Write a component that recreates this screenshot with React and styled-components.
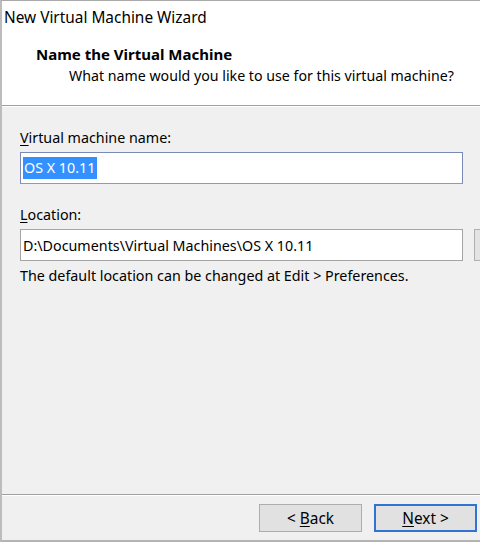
import React from "react";
import styled, {createGlobalStyle} from "styled-components";

const Global = createGlobalStyle`
    html, body {
        margin: 0;
        padding: 0;
        background: #f0f0f0;
    }
    body {
        font-family: "Noto Sans", "Open Sans", sans-serif;
        color: #000;
    }
`

const Window = styled.div`
    width: 480px;
    height: 542px;
    box-sizing: border-box;
    border-top: 1px solid #a9a9a9;
    border-left: 2px solid #bcbcbc;
    border-bottom: 2px solid #b4b4b4;
    display: flex;
    flex-direction: column;
    background: #f0f0f0;
    overflow: hidden;
`

const Header = styled.div`
    background: #fff;
    height: 105px;
    flex-shrink: 0;
    box-sizing: border-box;
    padding: 6px 0 0 2px;
    border-bottom: 1px solid #a0a0a0;
    box-shadow: 0 1px 0 #fff;
`

const Caption = styled.div`
    font-size: 15.4px;
    line-height: 22px;
`

const Heading = styled.div`
    font-weight: bold;
    font-size: 15px;
    line-height: 20px;
    margin: 15px 0 0 32px;
`

const Subheading = styled.div`
    font-size: 14.2px;
    line-height: 20px;
    margin: 2px 0 0 65px;
`

const Body = styled.div`
    flex: 1;
    padding: 22px 0 0 18px;
    display: flex;
    flex-direction: column;
`

const Label = styled.div`
    font-size: 14.3px;
    line-height: 20px;
    margin-top: ${({top}) => top || 0}px;
    u { text-decoration-thickness: 1px; text-underline-offset: 2px; }
`

const FieldRow = styled.div`
    display: flex;
    gap: 11px;
    margin-top: 4px;
`

const Field = styled.div`
    width: 443px;
    height: 32px;
    flex-shrink: 0;
    box-sizing: border-box;
    background: #fff;
    border: 1px solid ${({focused}) => (focused ? "#7a8ab8" : "#a5a5a5")};
    border-bottom-color: ${({focused}) => (focused ? "#9a8fd0" : "#a5a5a5")};
    font-size: 14.3px;
    display: flex;
    align-items: center;
    padding-left: 2px;
`

const Selected = styled.span`
    background: #3390ff;
    color: #fff;
    line-height: 22px;
    padding: 0 2px 0 1px;
`

const Browse = styled.div`
    width: 30px;
    height: 32px;
    flex-shrink: 0;
    box-sizing: border-box;
    border: 1px solid #b0b0b0;
    background: #e3e3e3;
`

const Note = styled.div`
    font-size: 14.3px;
    line-height: 20px;
    margin-top: 5px;
`

const Footer = styled.div`
    height: 46px;
    flex-shrink: 0;
    box-sizing: border-box;
    border-top: 1px solid #a0a0a0;
    box-shadow: inset 0 1px 0 #fff;
    display: flex;
    justify-content: flex-end;
    align-items: flex-start;
    gap: 12px;
    padding: 9px 3px 0 0;
`

const Button = styled.div`
    width: 103px;
    height: 28px;
    box-sizing: border-box;
    background: #e1e1e1;
    border: ${({primary}) => (primary ? "2px solid #2f74d0" : "1px solid #adadad")};
    display: flex;
    align-items: center;
    justify-content: center;
    font-size: 15.4px;
    u { text-decoration-thickness: 1px; text-underline-offset: 2px; }
`

const App = () => {
    return (
        <>
            <Global/>
            <Window>
                <Header>
                    <Caption>New Virtual Machine Wizard</Caption>
                    <Heading>Name the Virtual Machine</Heading>
                    <Subheading>What name would you like to use for this virtual machine?</Subheading>
                </Header>
                <Body>
                    <Label><u>V</u>irtual machine name:</Label>
                    <FieldRow>
                        <Field focused>
                            <Selected>OS X 10.11</Selected>
                        </Field>
                    </FieldRow>
                    <Label top={21}><u>L</u>ocation:</Label>
                    <FieldRow>
                        <Field>D:\Documents\Virtual Machines\OS X 10.11</Field>
                        <Browse/>
                    </FieldRow>
                    <Note>The default location can be changed at Edit &gt; Preferences.</Note>
                </Body>
                <Footer>
                    <Button><span>&lt; <u>B</u>ack</span></Button>
                    <Button primary><span><u>N</u>ext &gt;</span></Button>
                </Footer>
            </Window>
        </>
    )
}
export default App;
